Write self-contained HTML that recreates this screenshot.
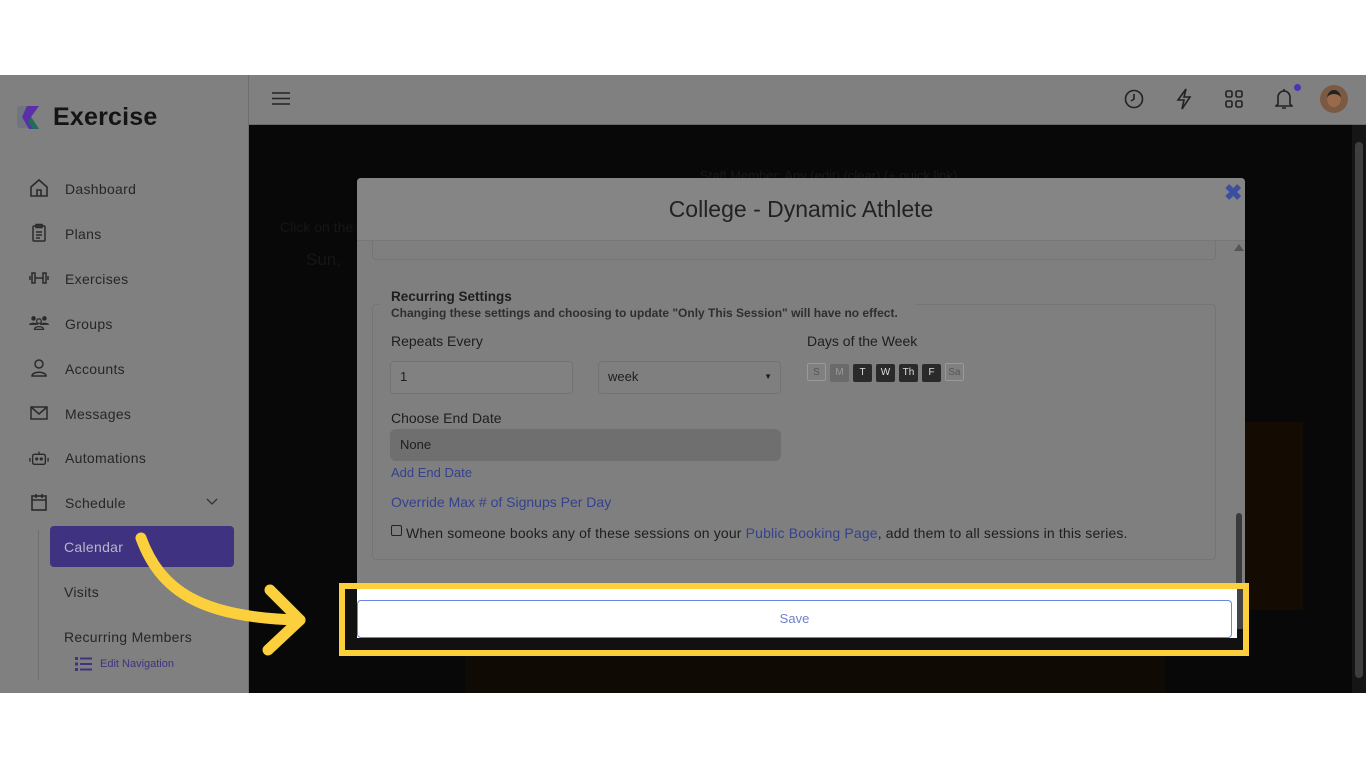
<!DOCTYPE html>
<html><head><meta charset="utf-8"><style>
*{box-sizing:border-box;margin:0;padding:0}
body{width:1366px;height:768px;background:#fff;position:relative;overflow:hidden;font-family:"Liberation Sans",sans-serif}
.abs{position:absolute}
#side{left:0;top:75px;width:249px;height:618px;background:#808080;border-right:1px solid #6e6e6e}
#top{left:249px;top:75px;width:1117px;height:50px;background:#808080;border-bottom:1px solid #6a6a6a}
#dark{left:249px;top:125px;width:1117px;height:568px;background:#080808}
.nav{position:absolute;left:65px;font-size:14px;color:#262626;letter-spacing:.3px}
.ic{position:absolute;left:29px;width:20px;height:20px}
#modal{left:357px;top:178px;width:888px;height:472px;background:#7f7f7f;border-radius:4px 4px 0 0}
#mh{left:357px;top:178px;width:888px;height:63px;background:#858585;border-bottom:1px solid #777;border-radius:4px 4px 0 0;text-align:center;font-size:23px;color:#222;line-height:62px}
.t{position:absolute;color:#1e1e1e;font-size:14px}
.lnk{color:#34418e}
.inp{position:absolute;border:1px solid #737373;border-radius:4px;background:#818181;font-size:13px;color:#1e1e1e;padding-left:9px;line-height:30px}
.day{display:inline-block;width:19px;height:18px;border-radius:2px;font-size:10px;text-align:center;line-height:18px;margin-right:4px;color:#ddd;background:#2a2a2a}
</style></head><body>
<div id="side" class="abs"></div>
<div id="top" class="abs"></div>
<div id="dark" class="abs"></div>

<svg class="abs" style="left:17px;top:104px" width="27" height="28" viewBox="0 0 27 28"><rect x="0" y="2" width="14" height="22" rx="3" fill="#6f7680"/><path d="M10 2h12l-8 11 8 12H12l-7-12z" fill="#5a2fa8"/><path d="M14 13l8 12h-6l-5-7z" fill="#1d6f5a"/></svg>
<div class="abs" style="left:53px;top:103px;font-size:25px;color:#141414;font-weight:bold;letter-spacing:.2px">Exercise</div>

<svg class="ic" style="top:178px" viewBox="0 0 20 20" fill="none" stroke="#2a2a2a" stroke-width="1.6"><path d="M2 9l8-7 8 7v9H2z"/><path d="M8 18v-6h4v6"/></svg>
<div class="nav" style="top:181px">Dashboard</div>
<svg class="ic" style="top:223px" viewBox="0 0 20 20" fill="none" stroke="#2a2a2a" stroke-width="1.5"><rect x="4" y="3" width="12" height="15" rx="1"/><rect x="7" y="1.5" width="6" height="3"/><path d="M7 9h6M7 12h6M7 15h4"/></svg>
<div class="nav" style="top:226px">Plans</div>
<svg class="ic" style="top:268px" viewBox="0 0 20 20" fill="none" stroke="#2a2a2a" stroke-width="1.5"><rect x="3" y="5" width="3" height="10"/><rect x="14" y="5" width="3" height="10"/><path d="M6 10h8M1 8v4M19 8v4"/></svg>
<div class="nav" style="top:271px">Exercises</div>
<svg class="ic" style="top:313px" viewBox="0 0 22 20" fill="#2a2a2a"><circle cx="5" cy="5" r="2.5"/><circle cx="17" cy="5" r="2.5"/><circle cx="11" cy="8" r="2.6" fill="none" stroke="#2a2a2a" stroke-width="1.4"/><path d="M0 12c0-3 10-3 10 0z"/><path d="M12 12c0-3 10-3 10 0z"/><path d="M6 17c0-4 10-4 10 0z" fill="none" stroke="#2a2a2a" stroke-width="1.4"/></svg>
<div class="nav" style="top:316px">Groups</div>
<svg class="ic" style="top:358px" viewBox="0 0 20 20" fill="none" stroke="#2a2a2a" stroke-width="1.5"><circle cx="10" cy="6" r="4"/><path d="M3 18c0-5 14-5 14 0z"/></svg>
<div class="nav" style="top:361px">Accounts</div>
<svg class="ic" style="top:403px" viewBox="0 0 20 20" fill="none" stroke="#2a2a2a" stroke-width="1.5"><rect x="2" y="4" width="16" height="12"/><path d="M2 4l8 7 8-7"/></svg>
<div class="nav" style="top:406px">Messages</div>
<svg class="ic" style="top:448px" viewBox="0 0 22 20" fill="none" stroke="#2a2a2a" stroke-width="1.5"><rect x="4" y="6" width="14" height="11" rx="2"/><path d="M11 6V3M1 10v4M21 10v4"/><circle cx="8.5" cy="11" r="1" fill="#2a2a2a"/><circle cx="13.5" cy="11" r="1" fill="#2a2a2a"/></svg>
<div class="nav" style="top:450px">Automations</div>
<svg class="ic" style="top:492px" viewBox="0 0 20 20" fill="none" stroke="#2a2a2a" stroke-width="1.6"><rect x="3" y="4" width="14" height="14"/><path d="M3 8h14M7 2v4M13 2v4"/></svg>
<div class="nav" style="top:495px">Schedule</div>
<svg class="abs" style="left:206px;top:498px" width="12" height="8" viewBox="0 0 12 8" fill="none" stroke="#333" stroke-width="1.3"><path d="M1 1l5 5 5-5"/></svg>
<div class="abs" style="left:38px;top:530px;width:1px;height:150px;background:#6f6f6f"></div>
<div class="abs" style="left:50px;top:526px;width:184px;height:41px;background:#3f3280;border-radius:4px"></div>
<div class="nav" style="top:539px;left:64px;color:#b8b8c8">Calendar</div>
<div class="nav" style="top:584px;left:64px">Visits</div>
<div class="nav" style="top:629px;left:64px">Recurring Members</div>
<svg class="abs" style="left:75px;top:657px" width="17" height="14" viewBox="0 0 17 14" fill="#3f3280"><rect x="0" y="0" width="3" height="3"/><rect x="0" y="5.5" width="3" height="3"/><rect x="0" y="11" width="3" height="3"/><rect x="5" y="0.5" width="12" height="2"/><rect x="5" y="6" width="12" height="2"/><rect x="5" y="11.5" width="12" height="2"/></svg>
<div class="abs" style="left:100px;top:658px;font-size:11px;color:#3f3280">Edit Navigation</div>

<svg class="abs" style="left:272px;top:91px" width="18" height="15" viewBox="0 0 18 15" stroke="#222" stroke-width="1.6"><path d="M0 2h18M0 7.5h18M0 13h18"/></svg>
<svg class="abs" style="left:1124px;top:89px" width="20" height="20" viewBox="0 0 20 20" fill="none" stroke="#222" stroke-width="1.6"><circle cx="10" cy="10" r="8.5"/><path d="M10 5v5l-3 2"/></svg>
<svg class="abs" style="left:1176px;top:88px" width="16" height="22" viewBox="0 0 16 22" fill="none" stroke="#222" stroke-width="1.6"><path d="M10 1L2 12h6l-2 9 8-12H8z"/></svg>
<svg class="abs" style="left:1225px;top:90px" width="18" height="18" viewBox="0 0 18 18" fill="none" stroke="#222" stroke-width="1.6"><rect x="1" y="1" width="6" height="6" rx="1.5"/><rect x="11" y="1" width="6" height="6" rx="1.5"/><rect x="1" y="11" width="6" height="6" rx="1.5"/><rect x="11" y="11" width="6" height="6" rx="1.5"/></svg>
<svg class="abs" style="left:1275px;top:88px" width="18" height="22" viewBox="0 0 18 22" fill="none" stroke="#222" stroke-width="1.6"><path d="M3 16V9a6 6 0 0112 0v7l2 2H1z"/><path d="M7 20h4M9 1v2"/></svg>
<div class="abs" style="left:1294px;top:84px;width:7px;height:7px;border-radius:50%;background:#4a34b0"></div>
<div class="abs" style="left:1320px;top:85px;width:28px;height:28px;border-radius:50%;background:#7b5a44;overflow:hidden"><div style="margin:5px 7px;width:14px;height:17px;border-radius:50%;background:#9a6a4c;border-top:4px solid #222"></div></div>

<div class="abs" style="left:280px;top:219px;font-size:14px;color:#161616">Click on the</div>
<div class="abs" style="left:306px;top:250px;font-size:17px;color:#161616">Sun,</div>
<div class="abs" style="left:700px;top:168px;font-size:13px;color:#181818">Staff Member: Any (edit) (clear) (+ quick link)</div>
<div class="abs" style="left:465px;top:655px;width:700px;height:38px;background:#0f0a04"></div>
<div class="abs" style="left:1245px;top:422px;width:58px;height:188px;background:#140b02"></div>
<div class="abs" style="left:1352px;top:125px;width:14px;height:568px;background:#151515"></div>
<div class="abs" style="left:1355px;top:142px;width:8px;height:536px;background:#3e3e3e;border-radius:4px"></div>

<div id="modal" class="abs"></div>
<div id="mh" class="abs">College - Dynamic Athlete</div>
<div class="abs" style="left:1224px;top:180px;font-size:22px;color:#3b4fa0;font-weight:bold">✖</div>
<div class="abs" style="left:372px;top:241px;width:844px;height:19px;border:1px solid #757575;border-top:none;border-radius:0 0 4px 4px"></div>
<div class="abs" style="left:1234px;top:244px;width:0;height:0;border-left:5px solid transparent;border-right:5px solid transparent;border-bottom:7px solid #555"></div>
<div class="abs" style="left:1236px;top:513px;width:6px;height:110px;background:#3a3a3a;border-radius:3px"></div>
<div class="abs" style="left:372px;top:304px;width:844px;height:256px;border:1px solid #757575;border-radius:4px"></div>
<div class="abs" style="left:380px;top:300px;width:535px;height:12px;background:#7f7f7f"></div>
<div class="t" style="left:391px;top:289px;font-weight:bold;font-size:13.5px">Recurring Settings</div>
<div class="t" style="left:391px;top:306px;font-size:12px;font-weight:bold;color:#2f2f2f">Changing these settings and choosing to update "Only This Session" will have no effect.</div>
<div class="t" style="left:391px;top:333px">Repeats Every</div>
<div class="inp" style="left:390px;top:361px;width:183px;height:33px">1</div>
<div class="inp" style="left:598px;top:361px;width:183px;height:33px;background:#7f7f7f">week<span style="position:absolute;right:8px;font-size:8px">▼</span></div>
<div class="t" style="left:807px;top:333px">Days of the Week</div>
<div class="abs" style="left:807px;top:362px;white-space:nowrap"><span class="day" style="background:#808080;border:1px solid #999;color:#555">S</span><span class="day" style="background:#6a6a6a;color:#999">M</span><span class="day">T</span><span class="day">W</span><span class="day">Th</span><span class="day">F</span><span class="day" style="background:#808080;border:1px solid #999;color:#555">Sa</span></div>
<div class="t" style="left:391px;top:410px">Choose End Date</div>
<div class="inp" style="left:390px;top:429px;width:391px;height:32px;background:#6f6f6f;border-color:#6f6f6f;border-radius:6px">None</div>
<div class="t lnk" style="left:391px;top:465px;font-size:13px">Add End Date</div>
<div class="t lnk" style="left:391px;top:494px">Override Max # of Signups Per Day</div>
<div class="abs" style="left:391px;top:525px;width:11px;height:11px;border:1px solid #222;border-radius:2px"></div>
<div class="t" style="left:406px;top:525px;letter-spacing:.15px">When someone books any of these sessions on your <span class="lnk">Public Booking Page</span>, add them to all sessions in this series.</div>

<div class="abs" style="left:339px;top:583px;width:910px;height:73px;border:6px solid #fcd03c"></div>
<div class="abs" style="left:345px;top:589px;width:898px;height:61px;background:#111"></div>
<div class="abs" style="left:357px;top:589px;width:880px;height:49px;background:#fff"></div>
<div class="abs" style="left:357px;top:600px;width:875px;height:38px;border:1px solid #6b86e0;border-radius:4px;background:#fff;text-align:center;line-height:36px;font-size:13px;color:#6f80c8">Save</div>
<div class="abs" style="left:1237px;top:589px;width:6px;height:40px;background:#444"></div>

<svg class="abs" style="left:130px;top:530px" width="190" height="130" viewBox="0 0 190 130" fill="none" stroke="#fcd03c" stroke-width="11" stroke-linecap="round" stroke-linejoin="round"><path d="M11 8C30 60 70 88 170 90"/><path d="M140 60l30 30-32 30"/></svg>
</body></html>
